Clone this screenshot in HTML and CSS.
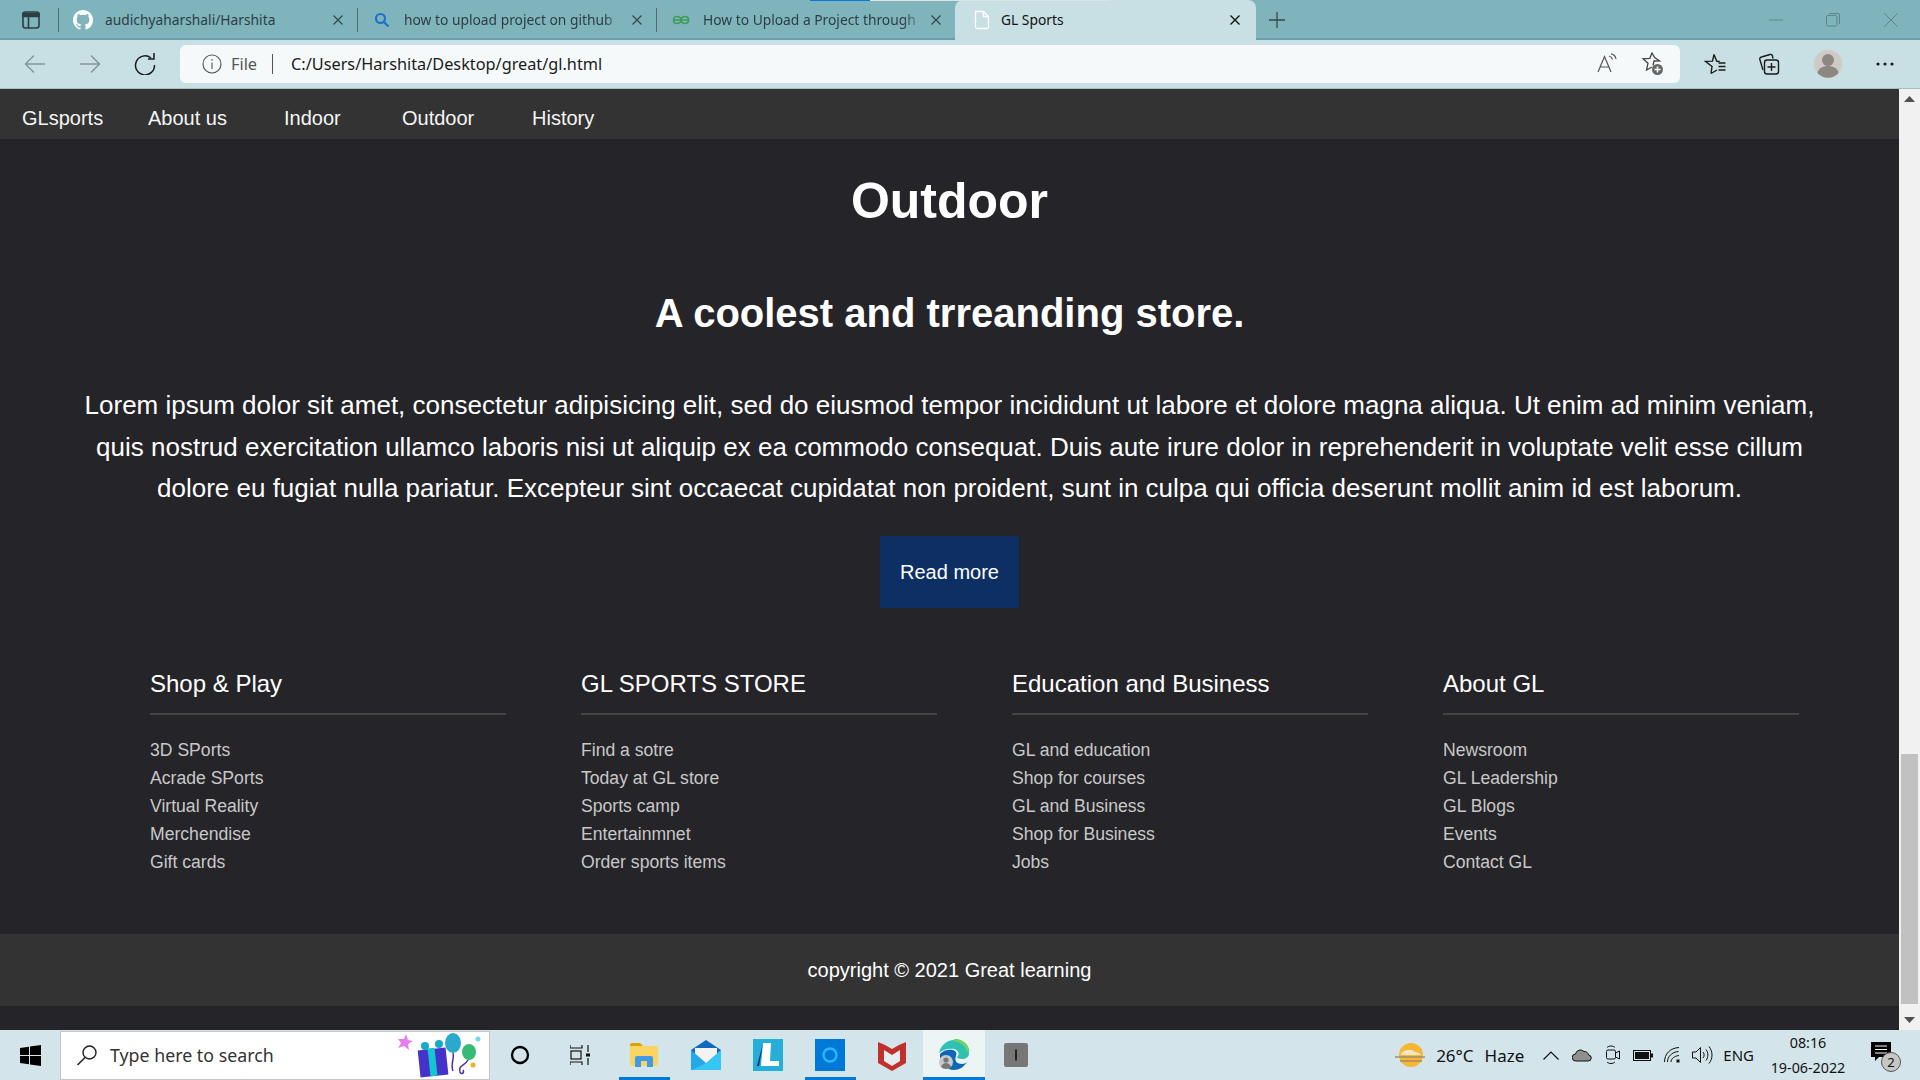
FILE: index.html
```html
<!DOCTYPE html>
<html lang="en">
<head>
<meta charset="utf-8">
<title>GL Sports</title>
<link rel="stylesheet" href="styles.css">
</head>
<body>
<div class="screen">
  <div class="tabbar">
    <div class="load"><span class="load-a"></span><span class="load-b"></span></div>
    <div class="side-btn">
      <svg width="20" height="20" viewBox="0 0 20 20" fill="none" stroke="#2c3e44" stroke-width="1.6"><rect x="2" y="2" width="16" height="16" rx="2.5"/><path d="M2 3.5h16v3H2z" fill="#2c3e44"/><path d="M7.5 6v12"/></svg>
    </div>
    <div class="tab">
      <svg class="fav" width="20" height="20" viewBox="0 0 16 16" fill="#fff"><path d="M8 0C3.58 0 0 3.58 0 8c0 3.54 2.29 6.53 5.47 7.59.4.07.55-.17.55-.38 0-.19-.01-.82-.01-1.49-2.01.37-2.53-.49-2.69-.94-.09-.23-.48-.94-.82-1.13-.28-.15-.68-.52-.01-.53.63-.01 1.08.58 1.23.82.72 1.21 1.87.87 2.33.66.07-.52.28-.87.51-1.07-1.78-.2-3.64-.89-3.64-3.95 0-.87.31-1.59.82-2.15-.08-.2-.36-1.02.08-2.12 0 0 .67-.21 2.2.82.64-.18 1.32-.27 2-.27s1.36.09 2 .27c1.53-1.04 2.2-.82 2.2-.82.44 1.1.16 1.92.08 2.12.51.56.82 1.27.82 2.15 0 3.07-1.87 3.75-3.65 3.95.29.25.54.73.54 1.48 0 1.07-.01 1.93-.01 2.2 0 .21.15.46.55.38A8.01 8.01 0 0 0 16 8c0-4.42-3.58-8-8-8z"/></svg>
      <span class="tab-text">audichyaharshali/Harshita</span>
      <svg class="x" width="12" height="12" viewBox="0 0 12 12" stroke="#33474d" stroke-width="1.2"><path d="M1.5 1.5l9 9M10.5 1.5l-9 9"/></svg>
    </div>
    <div class="tab">
      <svg class="fav" width="20" height="20" viewBox="0 0 20 20" fill="none" stroke="#1a73c8" stroke-width="2.2"><circle cx="8.5" cy="8.5" r="4.5"/><path d="M12 12l4.5 4.5"/></svg>
      <span class="tab-text fade">how to upload project on github</span>
      <svg class="x" width="12" height="12" viewBox="0 0 12 12" stroke="#33474d" stroke-width="1.2"><path d="M1.5 1.5l9 9M10.5 1.5l-9 9"/></svg>
    </div>
    <div class="tab tab-last">
      <svg class="fav" width="20" height="20" viewBox="0 0 20 20" fill="none" stroke="#3f9a58" stroke-width="1.6"><path d="M2 10h16M6 6.5c-2 0-3.5 1.5-3.5 3.5s1.5 3.5 3.5 3.5c2.5 0 4-2 4-3.5 0 1.500 1.500 3.500 4 3.500 2 0 3.500-1.500 3.500-3.500s-1.500-3.500-3.500-3.500c-2.500 0-4 2-4 3.500 0-1.500-1.500-3.500-4-3.500z"/></svg>
      <span class="tab-text fade">How to Upload a Project through</span>
      <svg class="x" width="12" height="12" viewBox="0 0 12 12" stroke="#33474d" stroke-width="1.2"><path d="M1.5 1.5l9 9M10.5 1.5l-9 9"/></svg>
    </div>
    <div class="tab-active">
      <svg class="fav fav-active" width="20" height="20" viewBox="0 0 20 20" fill="none" stroke="#fff" stroke-width="1.3"><path d="M3.500 1.500h8l5 5v10.500a1.500 1.500 0 0 1-1.500 1.500h-10a1.500 1.500 0 0 1-1.500-1.500z"/><path d="M11.500 1.500v5h5"/></svg>
      <span class="tab-text active-text">GL Sports</span>
      <svg class="x" width="12" height="12" viewBox="0 0 12 12" stroke="#111" stroke-width="1.4"><path d="M1.500 1.500l9 9M10.500 1.500l-9 9"/></svg>
    </div>
    <div class="new-tab">
      <svg width="18" height="18" viewBox="0 0 18 18" stroke="#33474d" stroke-width="1.300"><path d="M9 1v16M1 9h16"/></svg>
    </div>
    <div class="win-controls">
      <svg class="wc-min" width="14" height="14" viewBox="0 0 14 14" stroke="#5d838b" stroke-width="1"><path d="M0 7h14"/></svg>
      <svg class="wc-max" width="14" height="14" viewBox="0 0 14 14" fill="none" stroke="#5d838b" stroke-width="1"><rect x=".5" y="2.500" width="10.500" height="10.500" rx="1.500"/><path d="M3 .5h9a1.500 1.500 0 0 1 1.500 1.500v9"/></svg>
      <svg width="14" height="14" viewBox="0 0 14 14" stroke="#5d838b" stroke-width="1"><path d="M0 0l14 14M14 0L0 14"/></svg>
    </div>
  </div>

  <div class="toolbar">
    <div class="nav-btns">
      <svg class="nb" width="22" height="22" viewBox="0 0 22 22" fill="none" stroke="#83979c" stroke-width="1.500"><path d="M21 11H1.500M10 2.500L1.500 11l8.500 8.500"/></svg>
      <svg class="nb" width="22" height="22" viewBox="0 0 22 22" fill="none" stroke="#83979c" stroke-width="1.500"><path d="M1 11h19.500M12 2.500l8.500 8.500-8.500 8.500"/></svg>
      <svg class="nb" width="22" height="22" viewBox="0 0 22 22" fill="none" stroke="#1b1b1b" stroke-width="1.500"><path d="M17 5A9.500 9.500 0 1 0 20.500 12"/><path d="M20 0v6h-6"/></svg>
    </div>
    <div class="address">
      <svg width="20" height="20" viewBox="0 0 20 20" fill="none" stroke="#555" stroke-width="1.100"><circle cx="10" cy="10" r="9"/><path d="M10 8.500V15M10 5v1.800"/></svg>
      <span class="file">File</span>
      <span class="divider"></span>
      <span class="url">C:/Users/Harshita/Desktop/great/gl.html</span>
      <span class="spring"></span>
      <svg class="addr-i" width="22" height="22" viewBox="0 0 22 22" fill="none" stroke="#555" stroke-width="1.200"><path d="M1 19L7.500 3.500 14 19M3.500 14h8"/><path d="M12 3c2 .5 3 1.500 3.500 3.500M14 .8c3 .5 4.500 2.200 5 5.200"/></svg>
      <svg class="addr-j" width="24" height="24" viewBox="0 0 24 24" fill="none" stroke="#444" stroke-width="1.300"><path d="M13 13.500l1-4.500 5.500-.2-4.800-3.300L12 1 9.800 6.300 3 6.800l5 4.500L6.500 18l5.500-3"/><circle cx="17.500" cy="17.500" r="5.500" fill="#666" stroke="none"/><path d="M17.500 14.500v6M14.500 17.500h6" stroke="#fff" stroke-width="1.500"/></svg>
    </div>
    <div class="tools">
      <svg width="24" height="24" viewBox="0 0 24 24" fill="none" stroke="#1b1b1b" stroke-width="1.400"><path d="M11 2.500l2.800 6.800 3 .2M8 21.500l1-7L2.500 9.300l7-.2L11 2.500M8 21.500l6-3.500"/><path d="M15.500 11h7M15.500 14.500h7M15.500 18h7"/></svg>
      <svg class="tool-coll" width="24" height="24" viewBox="0 0 24 24" fill="none" stroke="#1b1b1b" stroke-width="1.400"><path d="M6 18l-3-10a2 2 0 0 1 1.500-3L13 2.500a2 2 0 0 1 2.500 1.500l.4 2.500"/><rect x="7.500" y="8" width="14" height="14" rx="2.500"/><path d="M14.500 11v8M10.500 15h8"/></svg>
      <svg class="tool-user" width="28" height="28" viewBox="0 0 28 28"><circle cx="14" cy="14" r="14" fill="#cfcac5"/><circle cx="14" cy="10" r="6" fill="#8c8781"/><path d="M3.500 23c1-5 5-7 10.500-7s9.500 2 10.500 7a14 14 0 0 1-21 0z" fill="#8c8781"/></svg>
      <svg class="more" width="18" height="6" viewBox="0 0 18 6" fill="#1b1b1b"><circle cx="2" cy="3" r="1.600"/><circle cx="9" cy="3" r="1.600"/><circle cx="16" cy="3" r="1.600"/></svg>
    </div>
  </div>

  <div class="viewport">
    <div class="page">
      <nav class="site-nav">
        <a class="brand">GLsports</a>
        <a class="n1">About us</a>
        <a class="n2">Indoor</a>
        <a class="n3">Outdoor</a>
        <a class="n4">History</a>
      </nav>
      <main class="hero">
        <h1>Outdoor</h1>
        <h2>A coolest and trreanding store.</h2>
        <p>Lorem ipsum dolor sit amet, consectetur adipisicing elit, sed do eiusmod tempor incididunt ut labore et dolore magna aliqua. Ut enim ad minim veniam, quis nostrud exercitation ullamco laboris nisi ut aliquip ex ea commodo consequat. Duis aute irure dolor in reprehenderit in voluptate velit esse cillum dolore eu fugiat nulla pariatur. Excepteur sint occaecat cupidatat non proident, sunt in culpa qui officia deserunt mollit anim id est laborum.</p>
        <a class="read-more">Read more</a>
      </main>
      <section class="footer-cols">
        <div class="col">
          <h3>Shop &amp; Play</h3>
          <ul><li>3D SPorts</li><li>Acrade SPorts</li><li>Virtual Reality</li><li>Merchendise</li><li>Gift cards</li></ul>
        </div>
        <div class="col">
          <h3>GL SPORTS STORE</h3>
          <ul><li>Find a sotre</li><li>Today at GL store</li><li>Sports camp</li><li>Entertainmnet</li><li>Order sports items</li></ul>
        </div>
        <div class="col">
          <h3>Education and Business</h3>
          <ul><li>GL and education</li><li>Shop for courses</li><li>GL and Business</li><li>Shop for Business</li><li>Jobs</li></ul>
        </div>
        <div class="col">
          <h3>About GL</h3>
          <ul><li>Newsroom</li><li>GL Leadership</li><li>GL Blogs</li><li>Events</li><li>Contact GL</li></ul>
        </div>
      </section>
      <footer class="copyright">copyright © 2021 Great learning</footer>
    </div>
    <div class="scrollbar">
      <svg class="arrow-up" width="11" height="6" viewBox="0 0 11 6" fill="#505050"><path d="M5.500 0L11 6H0z"/></svg>
      <div class="track"><div class="thumb"></div></div>
      <svg class="arrow-down" width="11" height="6" viewBox="0 0 11 6" fill="#505050"><path d="M0 0h11L5.500 6z"/></svg>
    </div>
  </div>

  <div class="taskbar">
    <div class="start">
      <svg width="21" height="21" viewBox="0 0 21 21" fill="#000"><path d="M0 3l9-1.300V10H0zM10 1.500L21 0v10H10zM0 11h9v8.300L0 18zM10 11h11v10l-11-1.500z"/></svg>
    </div>
    <div class="search">
      <svg width="22" height="22" viewBox="0 0 22 22" fill="none" stroke="#1c1c1c" stroke-width="1.400"><circle cx="13.500" cy="8.500" r="6.500"/><path d="M9 13.500L1.500 21"/></svg>
      <span class="search-text">Type here to search</span>
      <svg class="gift" width="88" height="46" viewBox="0 0 88 46">
        <path d="M7 7l2 -5 2 6 5 1-5 3 1 6-5-4-6 2 3-5-3-4z" fill="#e77df0"/>
        <rect x="22" y="17" width="28" height="27" fill="#4433c8" transform="rotate(-6 36 30)"/>
        <rect x="32" y="16" width="7" height="28" fill="#14c6cf" transform="rotate(-6 36 30)"/>
        <circle cx="28" cy="14" r="4" fill="#14a9c5"/><circle cx="42" cy="12" r="4" fill="#14a9c5"/>
        <ellipse cx="56" cy="11" rx="8" ry="10" fill="#2aa9cf"/>
        <ellipse cx="72" cy="20" rx="7" ry="8" fill="#35bb76"/>
        <path d="M56 21c2 6-3 10 0 18M71 28c-3 6-10 5-8 12 1 3 5 1 3-2" fill="none" stroke="#4a2fb0" stroke-width="1.500"/>
        <circle cx="81" cy="7" r="2.500" fill="#6fd9e8"/><circle cx="76" cy="33" r="2.500" fill="#f7ae1b"/>
      </svg>
    </div>
    <div class="apps">
      <div class="app w-cortana"><svg width="20" height="20" viewBox="0 0 20 20" fill="none" stroke="#000" stroke-width="2.300"><circle cx="10" cy="10" r="8"/></svg></div>
      <div class="app w-task"><svg width="20" height="22" viewBox="0 0 20 22" fill="none" stroke="#111" stroke-width="1.200"><path d="M0 1v3h12V1M0 21v-3h12v3"/><rect x="1" y="7" width="10" height="8"/><path d="M18 1v7M18 14v7"/><rect x="16" y="9.500" width="4" height="3" fill="#111" stroke="none"/></svg></div>
      <div class="app w-app running">
        <svg width="28" height="26" viewBox="0 0 28 26"><path d="M0 3a2 2 0 0 1 2-2h8l3 3H0z" fill="#e0a000"/><path d="M0 4h28v18a2 2 0 0 1-2 2H2a2 2 0 0 1-2-2z" fill="#fcd462"/><path d="M5 25v-9a2 2 0 0 1 2-2h14a2 2 0 0 1 2 2v9h-6v-6h-6v6z" fill="#3f9be8"/></svg>
      </div>
      <div class="app w-app">
        <svg width="30" height="30" viewBox="0 0 30 30"><path d="M0 10L15 0l15 10v20H0z" fill="#0f6cbd"/><path d="M4 8h22v9l-11 7-11-7z" fill="#f3f3f3"/><path d="M0 10l15 13-15 7z" fill="#23a9e8"/><path d="M30 10L15 23 0 30h30z" fill="#36c5f5"/></svg>
      </div>
      <div class="app w-app">
        <svg width="30" height="32" viewBox="0 0 30 32"><rect width="30" height="32" fill="#25aed8"/><path d="M10 4h8l-1 18h9v5H8z" fill="#fff"/><path d="M10 4L6 27H4z" fill="#0a2a78"/></svg>
      </div>
      <div class="app w-app running">
        <svg width="30" height="32" viewBox="0 0 30 32"><rect width="30" height="32" fill="#0078d7"/><circle cx="15" cy="16" r="6.500" fill="none" stroke="#2ab8f6" stroke-width="2.300"/></svg>
      </div>
      <div class="app w-app">
        <svg width="28" height="32" viewBox="0 0 28 32"><path d="M0 3l7 3 7 4 7-4 7-3v21l-14 8-14-8z" fill="#c0312d"/><path d="M6 11l8 5 8-5v11l-8 5-8-5z" fill="#e8eef0"/></svg>
      </div>
      <div class="app w-app active">
        <svg width="32" height="32" viewBox="0 0 32 32"><path d="M1 14C3 5 10 1 16 1c9 0 15 7 15 13 0 4-3 6-7 6-3 0-5-1-5-2 3-2 2-7-3-8-6-1-12 1-15 4z" fill="#2fc2b0"/><path d="M30 12c-1-6-7-11-14-11" fill="none" stroke="#6bd36a" stroke-width="3"/><path d="M2 15c3-4 9-5 13-4 3 1 4 3 3 6-2 5 1 8 6 8 2 0 4-1 5-2-3 5-8 8-13 8C8 31 1 24 2 15z" fill="#0c67b8"/><circle cx="8" cy="23" r="7" fill="#c9c9c9"/><circle cx="8" cy="21" r="2.600" fill="#777"/><path d="M3 28c1-3 3-4 5-4s4 1 5 4a7 7 0 0 1-10 0z" fill="#777"/></svg>
      </div>
      <div class="app w-app">
        <svg width="24" height="24" viewBox="0 0 24 24"><rect width="24" height="24" rx="2" fill="#777"/><rect x="11" y="6.500" width="2" height="11" fill="#222"/></svg>
      </div>
    </div>
    <div class="tray">
      <svg class="sun" width="30" height="26" viewBox="0 0 30 26"><circle cx="16" cy="13" r="12" fill="#f7b733"/><path d="M8 10c3-3 9-3 12 0 3 0 5 1 6 3H6c0-2 1-3 2-3z" fill="#f4e6c8"/><path d="M0 15h30M5 19h22" stroke="#a58c6e" stroke-width="1.500"/></svg>
      <span class="temp">26°C</span>
      <span class="haze">Haze</span>
      <svg class="t-chev" width="16" height="9" viewBox="0 0 16 9" fill="none" stroke="#111" stroke-width="1.200"><path d="M.5 8.500L8 1l7.500 7.500"/></svg>
      <svg class="t-cloud" width="20" height="14" viewBox="0 0 20 14" fill="#8f8f8f" stroke="#111" stroke-width="1"><path d="M4 13a3.500 3.500 0 0 1-.5-7A5 5 0 0 1 12 3.500 4 4 0 0 1 16.500 7 3 3 0 0 1 16 13z"/></svg>
      <svg class="t-cam" width="14" height="20" viewBox="0 0 14 20" fill="none" stroke="#111" stroke-width="1"><rect x=".5" y="5" width="9" height="9" rx="1.500"/><path d="M9.500 8l4-2v8l-4-2M1 2.500c2-2 6-2 8 0M1 17c2 2 6 2 8 0"/></svg>
      <svg class="t-bat" width="20" height="11" viewBox="0 0 20 11" fill="none" stroke="#111" stroke-width="1"><rect x=".5" y=".5" width="17" height="10"/><rect x="2" y="2" width="14" height="7" fill="#111" stroke="none"/><rect x="18" y="3.500" width="2" height="4" fill="#111" stroke="none"/></svg>
      <svg class="t-wifi" width="16" height="16" viewBox="0 0 16 16" fill="none" stroke="#111" stroke-width="1"><path d="M.5 15C.5 7 6 1 15 .5M3.500 15c0-5 4-10 11-10.500M7 15c0-3 3-6 8-6.500"/><rect x="12.500" y="12.500" width="3" height="3" fill="#111" stroke="none"/></svg>
      <svg class="t-vol" width="21" height="18" viewBox="0 0 21 18" fill="none" stroke="#111" stroke-width="1"><path d="M.5 6h3.500l4.500-4.500v15L4 12H.5zM11 6c1.500 2 1.500 4 0 6M14 3.500c2.500 3.500 2.500 7.500 0 11M17 .5c4 5 4 12 0 17"/></svg>
      <span class="eng">ENG</span>
      <div class="clock"><span>08:16</span><span>19-06-2022</span></div>
      <div class="notif">
        <svg width="20" height="20" viewBox="0 0 20 20"><path d="M0 0h20v15H8l-4 4v-4H0z" fill="#000"/><path d="M4 4h12M4 7.500h12M4 11h12" stroke="#fff" stroke-width="1"/></svg>
        <span class="badge">2</span>
      </div>
    </div>
  </div>
</div>
</body>
</html>
```

FILE: styles.css
```css
* { box-sizing: border-box; }
html, body { margin: 0; padding: 0; height: 100%; overflow: hidden; }
body { font-family: "Liberation Sans", Arial, sans-serif; }
.screen { display: flex; flex-direction: column; width: 1920px; height: 1080px; }

/* Browser tab strip */
.tabbar { position: relative; flex: 0 0 40px; display: flex; align-items: center; background: #7fb4bd; box-shadow: inset 0 -2px 0 #6b9da7; font-family: "Noto Sans", sans-serif; font-size: 13.800px; color: #2c3e44; }
.load { position: absolute; left: 810px; top: 0; display: flex; height: 1px; }
.load-a { width: 60px; background: #0a78d7; }
.load-b { width: 240px; background: #dbe3e5; }
.side-btn { flex: 0 0 59px; height: 24px; display: flex; align-items: center; padding-left: 21px; border-right: 1px solid #4c6c74; }
.tab { flex: 0 0 299px; height: 24px; display: flex; align-items: center; padding: 0 13px 0 14px; border-right: 1px solid #4c6c74; }
.tab-last { border-right: 0; flex-basis: 298px; }
.fav { flex: none; margin-right: 12px; }
.fav-active { margin-right: 9px; }
.tab-text { flex: 1; overflow: hidden; white-space: nowrap; padding: 0 4px 2px 0; }
.fade { -webkit-mask-image: linear-gradient(90deg, #000 88%, transparent 98%); mask-image: linear-gradient(90deg, #000 88%, transparent 98%); }
.x { flex: none; }
.tab-active { flex: 0 0 301px; height: 40px; display: flex; align-items: center; padding: 0 15px 0 17px; background: #c8e0e4; border-radius: 8px 8px 0 0; }
.active-text { color: #111; }
.new-tab { flex: 0 0 42px; display: flex; justify-content: center; }
.win-controls { margin-left: auto; display: flex; padding-right: 22px; }
.wc-min { margin-right: 43px; }
.wc-max { margin-right: 44px; }

/* Browser toolbar */
.toolbar { flex: 0 0 49px; display: flex; align-items: center; background: #c8e0e4; border-bottom: 1px solid #a6bdc2; }
.nav-btns { flex: 0 0 180px; display: flex; gap: 33px; padding-left: 24px; }
.address { flex: 0 0 1500px; height: 38px; display: flex; align-items: center; padding: 0 16px 0 22px; background: #f5f9fa; border-radius: 6px; font-family: "Noto Sans", sans-serif; font-size: 16.300px; color: #1b1b1b; }
.file { margin-left: 9px; color: #555; }
.divider { width: 1px; height: 20px; margin: 0 18px 0 15px; background: #555; }
.url { white-space: nowrap; }
.spring { flex: 1; }
.addr-j { margin-left: 21px; }
.tools { flex: 1; display: flex; align-items: center; padding-left: 23px; gap: 32px; }
.tool-coll { margin-left: -2px; }
.tool-user { margin-left: 1px; }
.more { margin-left: 2px; }

/* Site page */
.viewport { flex: 1; display: flex; min-height: 0; }
.page { flex: 1; display: flex; flex-direction: column; background: #252429; color: #fff; }
.site-nav { flex: 0 0 50px; display: flex; align-items: center; background: #333; font-size: 20px; padding: 9px 0 0 22px; color: #f5f5f5; }
.brand { width: 126px; }
.n1 { width: 136px; }
.n2 { width: 118px; }
.n3 { width: 130px; }
.hero { display: flex; flex-direction: column; align-items: center; text-align: center; padding: 0 70px; }
.hero h1 { margin: 32px 0 0; font-size: 50px; line-height: 60px; font-weight: 700; }
.hero h2 { margin: 59px 0 0; font-size: 40px; line-height: 46px; font-weight: 700; }
.hero p { margin: 49px 0 0; font-size: 26px; line-height: 41.500px; }
.read-more { margin-top: 26px; width: 139px; height: 72px; padding-top: 2px; display: flex; align-items: center; justify-content: center; background: #0d2f63; font-size: 20px; }
.footer-cols { display: grid; grid-template-columns: repeat(4, 356px); column-gap: 75px; padding: 62px 0 0 150px; }
.col h3 { margin: 0; padding-bottom: 15px; font-size: 24px; line-height: 28px; font-weight: 400; border-bottom: 2px solid #444; }
.col ul { margin: 21px 0 0; padding: 0; list-style: none; font-size: 17.600px; line-height: 28px; color: #c8c8c8; }
.copyright { margin-top: 58px; height: 72px; padding-top: 2px; display: flex; align-items: center; justify-content: center; background: #333; font-size: 20px; }

/* Scrollbar */
.scrollbar { flex: 0 0 21px; display: flex; flex-direction: column; align-items: center; background: #f1f1f1; padding: 7px 0; }
.track { flex: 1; width: 17px; display: flex; flex-direction: column; justify-content: flex-end; padding-bottom: 13px; }
.thumb { height: 250px; background: #c1c1c1; }

/* Windows taskbar */
.taskbar { flex: 0 0 50px; display: flex; align-items: center; background: #d3e5ea; font-family: "Noto Sans", sans-serif; color: #111; }
.start { flex: 0 0 60px; display: flex; justify-content: center; }
.search { flex: 0 0 430px; height: 49px; display: flex; align-items: center; padding: 0 0 0 15px; background: #fff; border: 1px solid #c6c6c6; font-size: 17.800px; color: #333; }
.search-text { margin-left: 12px; }
.gift { margin-left: auto; margin-right: 4px; }
.apps { display: flex; align-items: center; height: 50px; }
.app { display: flex; align-items: center; justify-content: center; height: 50px; }
.w-cortana { width: 60px; }
.w-task { width: 63px; padding-right: 4px; }
.w-app { width: 62px; }
.running { background: linear-gradient(#0078d7, #0078d7) center bottom / 51px 3px no-repeat; }
.active { background: linear-gradient(#0078d7, #0078d7) center bottom / 100% 3px no-repeat, #ecf4f6; }
.tray { margin-left: auto; display: flex; align-items: center; padding-right: 23px; font-size: 17px; }
.sun { margin-right: 11px; }
.haze { margin-left: 11px; margin-right: 19px; }
.t-cloud { margin-left: 13px; }
.t-cam { margin-left: 14px; }
.t-bat { margin-left: 12.500px; }
.t-wifi { margin-left: 11.500px; }
.t-vol { margin-left: 12px; }
.eng { margin-left: 10px; font-size: 15px; }
.clock { margin-left: 16px; width: 76px; display: flex; flex-direction: column; align-items: center; font-size: 14.300px; line-height: 25px; white-space: nowrap; }
.notif { position: relative; margin-left: 25px; width: 26px; height: 26px; display: flex; }
.badge { position: absolute; right: -4px; bottom: -4px; width: 20px; height: 20px; display: flex; align-items: center; justify-content: center; border-radius: 50%; background: #c6c6c6; border: 1px solid #555; font-size: 13px; color: #111; }
```
